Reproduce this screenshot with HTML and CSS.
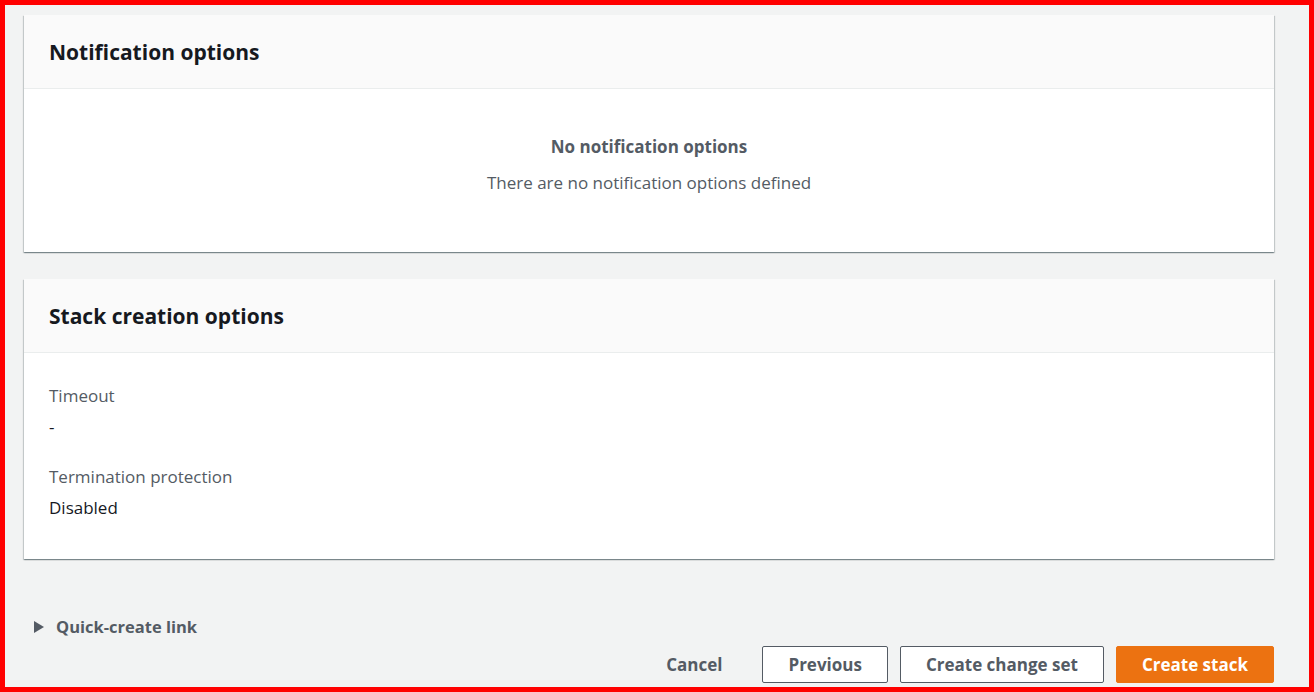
FILE: index.html
```html
<!DOCTYPE html>
<html>
<head>
<meta charset="utf-8">
<title>Review - Create stack</title>
<link rel="stylesheet" href="styles.css">
</head>
<body>
<div class="frame">
	<div class="panel">
		<div class="panel-header">
			<h2>Notification options</h2>
		</div>
		<div class="panel-body empty">
			<div class="empty-title">No notification options</div>
			<div class="empty-text">There are no notification options defined</div>
		</div>
	</div>

	<div class="panel">
		<div class="panel-header">
			<h2>Stack creation options</h2>
		</div>
		<div class="panel-body">
			<dl class="kv">
				<dt>Timeout</dt>
				<dd>-</dd>
				<dt>Termination protection</dt>
				<dd>Disabled</dd>
			</dl>
		</div>
	</div>

	<div class="expander">
		<svg class="caret" width="10" height="12" viewBox="0 0 10 12"><polygon points="0,0 10,6 0,12" fill="#545b64"/></svg>
		<span>Quick-create link</span>
	</div>

	<div class="actions">
		<button class="btn btn-link">Cancel</button>
		<button class="btn">Previous</button>
		<button class="btn">Create change set</button>
		<button class="btn btn-primary">Create stack</button>
	</div>
</div>
</body>
</html>
```

FILE: styles.css
```css
html, body {
	margin: 0;
	padding: 0;
}

body {
	font-family: "Open Sans", "Noto Sans", Arial, sans-serif;
	font-size: 17px;
	color: #16191f;
	background-color: #f2f3f3;
}

.frame {
	box-sizing: border-box;
	width: 1314px;
	height: 692px;
	border: 5px solid #ff0000;
	padding: 10px 35px 0 19px;
	overflow: hidden;
}

.panel {
	background-color: #fff;
	box-shadow: 0 1px 1px 0 rgba(0, 28, 36, 0.3), 1px 1px 1px 0 rgba(0, 28, 36, 0.15), -1px 1px 1px 0 rgba(0, 28, 36, 0.15);
	margin-bottom: 27px;
}

.panel-header {
	background-color: #fafafa;
	border-bottom: 1px solid #eaeded;
	height: 73px;
	padding: 0 25px;
	display: flex;
	align-items: center;
}

.panel-header h2 {
	margin: 0;
	padding-top: 1px;
	font-size: 21px;
	font-weight: 700;
	color: #16191f;
}

.panel-body {
	padding: 31px 25px 39px 25px;
}

.empty {
	text-align: center;
	color: #545b64;
	padding-top: 46px;
	padding-bottom: 57px;
}

.empty-title {
	font-weight: 700;
	line-height: 24px;
}

.empty-text {
	margin-top: 12px;
	line-height: 24px;
}

.kv {
	margin: 0;
}

.kv dt {
	color: #545b64;
	line-height: 24px;
	margin-bottom: 7px;
}

.kv dd {
	margin: 0 0 26px 0;
	line-height: 24px;
}

.kv dd:last-child {
	margin-bottom: 0;
}

.expander {
	display: flex;
	align-items: center;
	gap: 12px;
	margin: 56px 0 0 10px;
	font-weight: 700;
	color: #545b64;
	font-size: 16.5px;
	line-height: 24px;
}

.actions {
	display: flex;
	justify-content: flex-end;
	gap: 12px;
	margin-top: 7px;
}

.btn {
	font-family: inherit;
	font-size: 17px;
	font-weight: 700;
	color: #545b64;
	background-color: #fff;
	border: 1px solid #545b64;
	border-radius: 2px;
	height: 37px;
	padding: 0 25px;
	cursor: pointer;
}

.btn-link {
	background: none;
	border-color: transparent;
	padding: 0 20px;
	margin-right: 7px;
}

.btn-primary {
	background-color: #ec7211;
	border-color: #ec7211;
	color: #fff;
}
```
